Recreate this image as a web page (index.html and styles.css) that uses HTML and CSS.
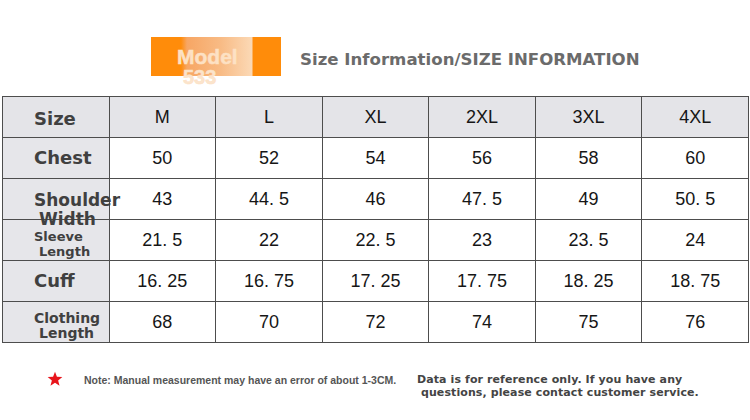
FILE: index.html
```html
<!DOCTYPE html>
<html>
<head>
<meta charset="utf-8">
<link rel="stylesheet" href="styles.css">
</head>
<body>
<div class="page">
  <header class="top">
    <div class="model">
      <div class="model-text">Model<br><span class="num">533</span></div>
    </div>
    <div class="title">Size Information/SIZE INFORMATION</div>
  </header>
  <table class="chart">
    <tr class="head">
      <th class="label"><span class="lbl">Size</span></th><th>M</th><th>L</th><th>XL</th><th>2XL</th><th>3XL</th><th>4XL</th>
    </tr>
    <tr>
      <th class="label">Chest</th><td>50</td><td>52</td><td>54</td><td>56</td><td>58</td><td>60</td>
    </tr>
    <tr>
      <th class="label two big"><span class="lbl">Shoulder<br><span class="sub">Width</span></span></th><td>43</td><td>44. 5</td><td>46</td><td>47. 5</td><td>49</td><td>50. 5</td>
    </tr>
    <tr>
      <th class="label two small"><span class="lbl">Sleeve<br><span class="sub">Length</span></span></th><td>21. 5</td><td>22</td><td>22. 5</td><td>23</td><td>23. 5</td><td>24</td>
    </tr>
    <tr>
      <th class="label">Cuff</th><td>16. 25</td><td>16. 75</td><td>17. 25</td><td>17. 75</td><td>18. 25</td><td>18. 75</td>
    </tr>
    <tr>
      <th class="label two mid"><span class="lbl">Clothing<br><span class="sub">Length</span></span></th><td>68</td><td>70</td><td>72</td><td>74</td><td>75</td><td>76</td>
    </tr>
  </table>
  <footer class="foot">
    <svg class="star" width="16" height="16" viewBox="0 0 24 24"><polygon points="12,1 14.9,8.6 23,9 16.7,14.1 18.8,22 12,17.5 5.2,22 7.3,14.1 1,9 9.1,8.6" fill="#e8141b"/></svg>
    <div class="note">Note: Manual measurement may have an error of about 1-3CM.</div>
    <div class="ref">Data is for reference only. If you have any<br>&nbsp;questions, please contact customer service.</div>
  </footer>
</div>
</body>
</html>
```
FILE: styles.css
```css
html, body {
  margin: 0;
  padding: 0;
  background: #fff;
}
.page {
  width: 750px;
  height: 420px;
  overflow: hidden;
  font-family: "Liberation Sans", Arial, sans-serif;
}
.top {
  display: flex;
  align-items: center;
  height: 39px;
  padding: 37px 0 0 151px;
}
.model {
  width: 130px;
  height: 39px;
  background: linear-gradient(90deg, #ff8c0a 0, #ff8c0a 30px, #f7a664 36px, #f8bb85 70px, #fbd6b1 98px, #fbd9b6 101px, #ff8c0a 102px, #ff8c0a 130px);
}
.model-text {
  padding: 10px 0 0 26px;
  font-weight: bold;
  font-size: 21px;
  line-height: 20px;
  color: #fde1c4;
  -webkit-text-stroke: 0.5px #fde1c4;
}
.model-text .num {
  display: inline-block;
  padding-left: 6px;
  font-size: 20px;
  color: #fbe4cc;
}
.title {
  margin-left: 19px;
  font-family: "DejaVu Sans", sans-serif;
  font-weight: bold;
  font-size: 16.6px;
  color: #6b6b6b;
  padding-top: 5px;
}
.chart {
  margin: 20px 0 0 2px;
  width: 747px;
  border-collapse: collapse;
  table-layout: fixed;
}
.chart tr {
  height: 41px;
}
.chart td, .chart th {
  border: 1px solid #4d4d4d;
  padding: 0;
  text-align: center;
  font-weight: normal;
  font-size: 18px;
  line-height: 20px;
  color: #161616;
  vertical-align: middle;
}
.chart .head th {
  background: #e4e4e8;
}
.chart .label {
  background: #e6e6ea;
  text-align: left;
  padding-left: 31px;
  font-family: "DejaVu Sans", sans-serif;
  font-weight: bold;
  font-size: 18px;
  color: #404040;
  white-space: nowrap;
  overflow: visible;
}
.chart .label .lbl {
  display: inline-block;
  position: relative;
}
.chart .head .label .lbl {
  top: 2px;
}
.chart .label.big {
  font-size: 17px;
  line-height: 19px;
}
.chart .label.big .lbl {
  top: 11px;
}
.chart .label.small {
  font-size: 13px;
  line-height: 15px;
}
.chart .label.small .lbl {
  top: 4px;
}
.chart .label.mid {
  font-size: 14px;
  line-height: 15px;
}
.chart .label.mid .lbl {
  top: 4px;
}
.chart .label .sub {
  padding-left: 5px;
}
.foot {
  display: flex;
  align-items: flex-start;
  padding: 28px 0 0 47px;
}
.note {
  margin-left: 21px;
  margin-top: 3px;
  font-weight: bold;
  font-size: 10.5px;
  color: #555;
  width: 314px;
}
.ref {
  margin-left: 19px;
  margin-top: 2px;
  font-family: "DejaVu Sans", sans-serif;
  font-weight: bold;
  font-size: 11px;
  letter-spacing: 0.1px;
  line-height: 13px;
  color: #444;
}
```
